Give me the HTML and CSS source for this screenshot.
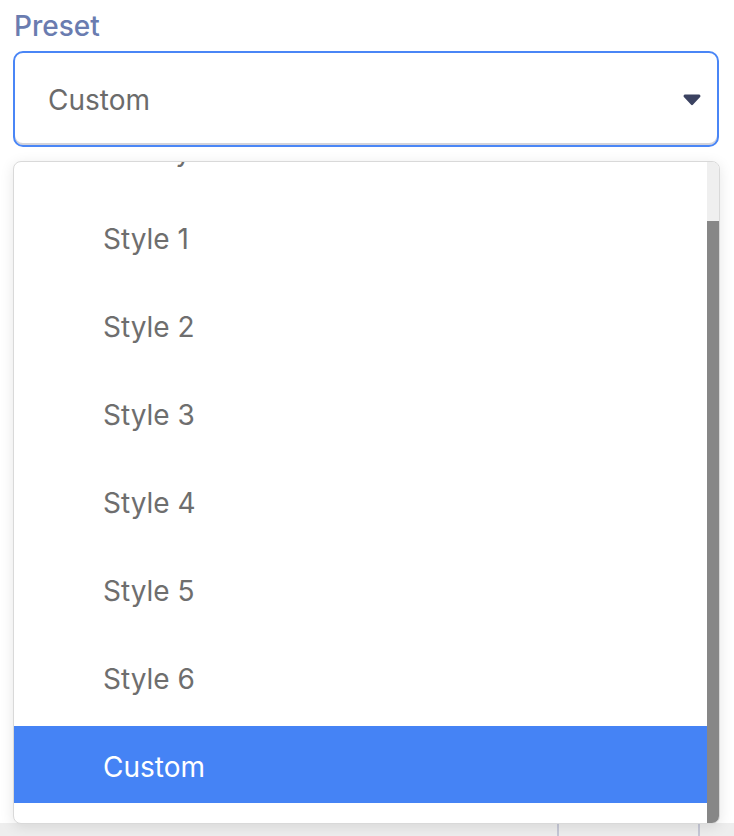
FILE: index.html
```html
<!DOCTYPE html>
<html lang="en">
<head>
<meta charset="utf-8">
<title>Preset</title>
<link rel="stylesheet" href="styles.css">
</head>
<body>
<div class="field">
  <label class="label">Preset</label>
  <div class="select">
    <span class="value">Custom</span>
    <svg class="arrow" width="18" height="12" viewBox="0 0 18 12" aria-hidden="true">
      <path d="M2 0.5h14a1.5 1.5 0 0 1 1.1 2.5l-7 7.6a1.5 1.5 0 0 1-2.2 0l-7-7.6A1.5 1.5 0 0 1 2 0.5z" fill="#3b4261"/>
    </svg>
  </div>
  <div class="under">
    <div class="cell cell-wide"></div>
    <div class="cell cell-mid"></div>
    <div class="cell cell-end"></div>
  </div>
  <div class="dropdown">
    <ul class="options">
      <li class="option first">Classy</li>
      <li class="option">Style 1</li>
      <li class="option">Style 2</li>
      <li class="option">Style 3</li>
      <li class="option">Style 4</li>
      <li class="option">Style 5</li>
      <li class="option">Style 6</li>
      <li class="option selected">Custom</li>
    </ul>
    <div class="scrollbar"><div class="thumb"></div></div>
  </div>
</div>
</body>
</html>
```

FILE: styles.css
```css
html, body {
  margin: 0;
  padding: 0;
  background: #ffffff;
}

body {
  font-family: Inter, "Noto Sans", "Liberation Sans", sans-serif;
  overflow: hidden;
  height: 836px;
}

.field {
  position: relative;
  padding: 9px 15px 0 13px;
}

.label {
  display: block;
  font-size: 28px;
  line-height: 34px;
  font-weight: 500;
  color: #6a7cb0;
  padding-left: 1px;
}

.select {
  margin-top: 8px;
  height: 96px;
  box-sizing: border-box;
  border: 2px solid #4a86f6;
  border-radius: 10px;
  box-shadow: inset 0 -2px 0 #d3d3da;
  display: flex;
  align-items: center;
  padding-left: 33px;
  padding-right: 16px;
  background: #ffffff;
}

.value {
  font-size: 28px;
  color: #6b6b6b;
  margin-top: 1px;
}

.arrow {
  margin-left: auto;
  margin-top: 1px;
}

.under {
  margin-top: 676px;
  height: 40px;
  background: #eeeeee;
  display: flex;
  margin-left: -13px;
  margin-right: -15px;
}

.cell-wide {
  width: 557px;
}

.cell-mid {
  width: 139px;
  border-left: 2px solid #c6c8d6;
}

.cell-end {
  flex: 1;
  border-left: 2px solid #c6c8d6;
}

.dropdown {
  position: absolute;
  top: 161px;
  left: 13px;
  width: 707px;
  height: 663px;
  box-sizing: border-box;
  border: 1px solid #d9d9d9;
  border-radius: 8px;
  background: #ffffff;
  box-shadow: 0 3px 14px rgba(0, 0, 0, 0.10);
  overflow: hidden;
  display: flex;
}

.options {
  list-style: none;
  margin: 0;
  padding: 0;
  flex: 1;
  overflow: hidden;
}

.option {
  height: 77px;
  box-sizing: border-box;
  padding: 5px 0 0 89px;
  line-height: 72px;
  margin-bottom: 11px;
  font-size: 28px;
  color: #6e6e6e;
  white-space: nowrap;
}

.option.first {
  margin-top: -52px;
}

.option.selected {
  background: #4583f5;
  color: #ffffff;
}

.scrollbar {
  width: 12px;
  background: #efefef;
  display: flex;
  flex-direction: column;
}

.thumb {
  margin-top: 59px;
  flex: 1;
  background: #878787;
}
```
